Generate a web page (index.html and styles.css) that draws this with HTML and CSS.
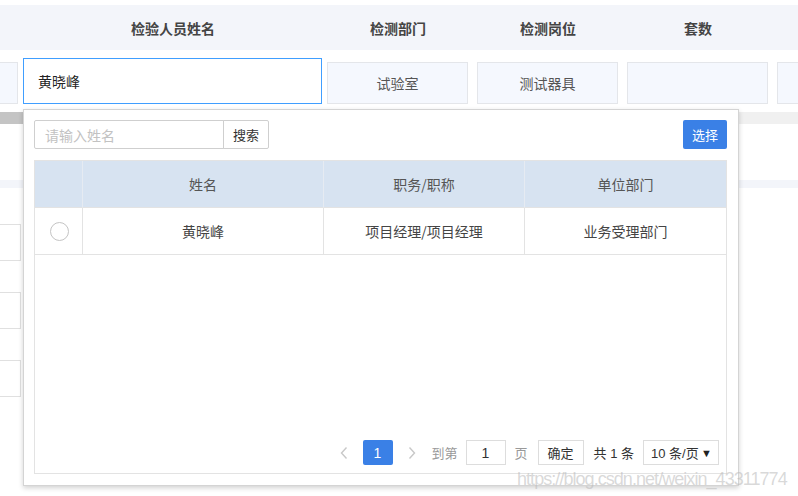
FILE: index.html
```html
<!DOCTYPE html>
<html lang="zh-CN">
<head>
<meta charset="utf-8">
<title>检验人员选择</title>
<link rel="stylesheet" href="styles.css">
</head>
<body>
<div class="page">
  <div class="thead">
    <div class="th c0"></div>
    <div class="th c1">检验人员姓名</div>
    <div class="th c2">检测部门</div>
    <div class="th c3">检测岗位</div>
    <div class="th c4">套数</div>
    <div class="th c5"></div>
  </div>
  <div class="trow">
    <div class="col c0"><div class="cell cell-first"></div></div>
    <div class="col c1"><div class="name-input">黄晓峰</div></div>
    <div class="col c2"><div class="cell">试验室</div></div>
    <div class="col c3"><div class="cell">测试器具</div></div>
    <div class="col c4"><div class="cell"></div></div>
    <div class="col c5"><div class="cell"></div></div>
  </div>
  <div class="hscroll"><div class="thumb"></div></div>
  <div class="band"></div>
  <div class="left-rows">
    <div class="lbox"></div>
    <div class="lbox"></div>
    <div class="lbox"></div>
  </div>

  <div class="popup">
    <div class="topbar">
      <div class="search">
        <div class="search-input">请输入姓名</div>
        <div class="search-btn">搜索</div>
      </div>
      <div class="select-btn">选择</div>
    </div>
    <div class="tbox">
      <div class="grid">
        <div class="gh"></div>
        <div class="gh">姓名</div>
        <div class="gh">职务/职称</div>
        <div class="gh last">单位部门</div>
        <div class="gd"><span class="radio"></span></div>
        <div class="gd">黄晓峰</div>
        <div class="gd">项目经理/项目经理</div>
        <div class="gd last">业务受理部门</div>
      </div>
      <div class="pager">
        <svg class="chev" width="10" height="14" viewBox="0 0 10 14"><path d="M7.5 1.5 L2.5 7 L7.5 12.5" fill="none" stroke="#c8c8c8" stroke-width="1.4"/></svg>
        <div class="pbtn">1</div>
        <svg class="chev chev-r" width="10" height="14" viewBox="0 0 10 14"><path d="M2.5 1.5 L7.5 7 L2.5 12.5" fill="none" stroke="#c8c8c8" stroke-width="1.4"/></svg>
        <span class="ptxt gray">到第</span>
        <div class="pinput">1</div>
        <span class="ptxt gray page-unit">页</span>
        <div class="pconfirm">确定</div>
        <span class="ptxt total">共 1 条</span>
        <div class="psel"><span>10 条/页</span><span class="caret">▼</span></div>
      </div>
    </div>
  </div>

  <div class="watermark">https://blog.csdn.net/weixin_43311774</div>
</div>
</body>
</html>
```

FILE: styles.css
```css
* { box-sizing: border-box; }
html, body {
  margin: 0;
  padding: 0;
  background: #fff;
  font-family: "Noto Sans CJK SC", "Noto Sans", sans-serif;
  font-size: 14px;
  color: #444;
}
.page {
  position: relative;
  width: 798px;
  height: 496px;
  overflow: hidden;
}
.thead {
  display: flex;
  margin-top: 5px;
  height: 45px;
  background: #f3f5fa;
}
.th {
  display: flex;
  align-items: center;
  justify-content: center;
  font-weight: bold;
  color: #444;
  font-size: 14px;
}
.c0 { width: 23px; flex: none; }
.c1 { width: 300px; flex: none; }
.c2, .c3, .c4 { width: 150px; flex: none; }
.c5 { flex: 1; }

.trow {
  display: flex;
  margin-top: 8px;
  height: 46px;
}
.col { display: flex; }
.cell {
  margin-top: 4px;
  margin-left: 4px;
  width: 141px;
  height: 42px;
  background: #f5f8fe;
  border: 1px solid #e4e6ea;
  display: flex;
  align-items: center;
  justify-content: center;
  color: #555;
}
.cell-first { margin-left: -2px; width: 20px; }
.c5 .cell { width: 40px; }
.name-input {
  width: 299px;
  height: 46px;
  border: 1px solid #409eff;
  background: #fff;
  display: flex;
  align-items: center;
  padding-left: 14px;
  color: #222;
}
.hscroll {
  margin-top: 8px;
  height: 12px;
  background: #f0f0f0;
}
.thumb {
  width: 300px;
  height: 12px;
  background: #c4c4c4;
}
.band {
  margin-top: 56px;
  height: 8px;
  background: #f3f5fa;
}
.left-rows {
  display: flex;
  flex-direction: column;
  gap: 31px;
  margin-top: 36px;
}
.lbox {
  margin-left: -2px;
  width: 23px;
  height: 37px;
  border: 1px solid #e0e0e0;
}

.popup {
  position: absolute;
  left: 23px;
  top: 109px;
  width: 716px;
  height: 377px;
  background: #fff;
  border: 1px solid #d4d4d4;
  box-shadow: 0 2px 5px rgba(0,0,0,0.18);
  padding: 10px 11px 11px 10px;
  display: flex;
  flex-direction: column;
}
.topbar {
  display: flex;
  justify-content: space-between;
  height: 29px;
}
.search { display: flex; }
.search-input {
  width: 190px;
  height: 29px;
  border: 1px solid #cfcfcf;
  border-radius: 2px 0 0 2px;
  color: #c2c2c2;
  display: flex;
  align-items: center;
  padding-left: 10px;
  font-size: 14px;
}
.search-btn {
  width: 46px;
  height: 29px;
  margin-left: -1px;
  border: 1px solid #cfcfcf;
  border-radius: 0 2px 2px 0;
  display: flex;
  align-items: center;
  justify-content: center;
  font-size: 13px;
  color: #333;
}
.select-btn {
  width: 44px;
  height: 29px;
  background: #3a80e6;
  border-radius: 2px;
  color: #fff;
  font-size: 13px;
  display: flex;
  align-items: center;
  justify-content: center;
}
.tbox {
  margin-top: 11px;
  flex: 1;
  border: 1px solid #e3e3e3;
  display: flex;
  flex-direction: column;
}
.grid {
  display: grid;
  grid-template-columns: 48px 241px 201px 1fr;
}
.gh, .gd {
  display: flex;
  align-items: center;
  justify-content: center;
  border-right: 1px solid #e3e3e3;
  border-bottom: 1px solid #e3e3e3;
}
.gh {
  height: 47px;
  background: #d7e3f1;
  color: #555;
  border-right-color: #e6ebf2;
  border-bottom-color: #e3e3e3;
}
.gd {
  height: 47px;
  color: #444;
}
.last { border-right: none; }
.radio {
  width: 19px;
  height: 19px;
  border: 1.5px solid #c4c4c4;
  border-radius: 50%;
  margin-left: 1px;
}
.pager {
  margin-top: auto;
  display: flex;
  align-items: center;
  justify-content: flex-end;
  padding: 0 7px 8px 0;
  height: 33px;
  font-family: "Liberation Sans", "Noto Sans CJK SC", sans-serif;
  font-size: 13px;
}
.chev { flex: none; }
.pbtn {
  width: 30px;
  height: 25px;
  margin-left: 14px;
  background: #3a80e6;
  border-radius: 2px;
  color: #fff;
  font-size: 14px;
  display: flex;
  align-items: center;
  justify-content: center;
}
.chev-r { margin-left: 14px; }
.ptxt { white-space: nowrap; }
.gray { color: #999; }
.chev-r + .ptxt { margin-left: 15px; }
.pinput {
  width: 40px;
  height: 25px;
  margin-left: 8px;
  border: 1px solid #ddd;
  display: flex;
  align-items: center;
  justify-content: center;
  color: #333;
  font-size: 14px;
}
.page-unit { margin-left: 9px; }
.pconfirm {
  width: 46px;
  height: 25px;
  margin-left: 10px;
  border: 1px solid #ddd;
  display: flex;
  align-items: center;
  justify-content: center;
  color: #333;
  font-size: 13px;
}
.total { margin-left: 10px; color: #333; }
.psel {
  width: 76px;
  height: 25px;
  margin-left: 9px;
  border: 1px solid #ddd;
  display: flex;
  align-items: center;
  justify-content: space-between;
  padding: 0 6px 0 7px;
  color: #333;
  font-size: 13px;
  white-space: nowrap;
}
.caret { font-size: 11px; color: #222; }

.watermark {
  position: absolute;
  left: 517px;
  top: 469px;
  font-family: "Liberation Sans", Arial, sans-serif;
  font-size: 18px;
  letter-spacing: -0.95px;
  color: rgba(185,185,185,0.55);
  white-space: nowrap;
  pointer-events: none;
}
```
